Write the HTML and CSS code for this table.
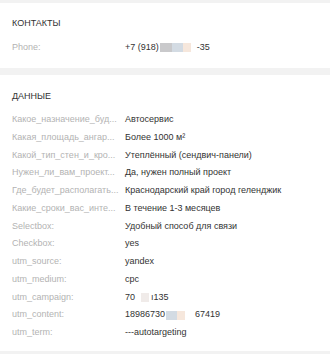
FILE: index.html
```html
<!DOCTYPE html>
<html lang="ru">
<head>
<meta charset="utf-8">
<link rel="stylesheet" href="styles.css">
</head>
<body>
<section class="card card-contacts">
  <h2 class="card-title">Контакты</h2>
  <div class="row">
    <span class="label">Phone:</span>
    <span class="value">+7 (918)<span class="mask"><i class="m-gray"></i><i class="m-blue"></i><i class="m-peach"></i></span>-35</span>
  </div>
</section>
<section class="card card-data">
  <h2 class="card-title">Данные</h2>
  <div class="row"><span class="label">Какое_назначение_буд...</span><span class="value">Автосервис</span></div>
  <div class="row"><span class="label">Какая_площадь_ангар...</span><span class="value">Более 1000 м²</span></div>
  <div class="row"><span class="label">Какой_тип_стен_и_кро...</span><span class="value">Утеплённый (сендвич-панели)</span></div>
  <div class="row"><span class="label">Нужен_ли_вам_проект...</span><span class="value">Да, нужен полный проект</span></div>
  <div class="row"><span class="label">Где_будет_располагать...</span><span class="value">Краснодарский край город геленджик</span></div>
  <div class="row"><span class="label">Какие_сроки_вас_инте...</span><span class="value">В течение 1-3 месяцев</span></div>
  <div class="row"><span class="label">Selectbox:</span><span class="value">Удобный способ для связи</span></div>
  <div class="row"><span class="label">Checkbox:</span><span class="value">yes</span></div>
  <div class="row"><span class="label">utm_source:</span><span class="value">yandex</span></div>
  <div class="row"><span class="label">utm_medium:</span><span class="value">cpc</span></div>
  <div class="row"><span class="label">utm_campaign:</span><span class="value">70<span class="mask mask-camp"><i class="m-light"></i></span>ı135</span></div>
  <div class="row"><span class="label">utm_content:</span><span class="value">18986730<span class="mask mask-content"><i class="m-blue"></i><i class="m-peach"></i></span>67419</span></div>
  <div class="row"><span class="label">utm_term:</span><span class="value">---autotargeting</span></div>
</section>
</body>
</html>
```
FILE: styles.css
```css
html, body {
  margin: 0;
  padding: 0;
}
body {
  background: #f2f2f2;
  font-family: "Liberation Sans", Arial, sans-serif;
  font-size: 9px;
  color: #333333;
  padding-top: 3px;
}
.card {
  background: #ffffff;
  padding: 14px 12px 12px;
}
.card-contacts .row {
  line-height: 18px;
  height: 18px;
}
.card-data {
  margin-top: 7px;
  padding-bottom: 9px;
}
.card-title {
  margin: 0 0 9px;
  font-size: 9px;
  font-weight: normal;
  text-transform: uppercase;
  line-height: 12px;
  color: #333333;
}
.card-data .card-title {
  margin-top: 1px;
  margin-bottom: 9px;
}
.row {
  display: grid;
  grid-template-columns: 107px 1fr;
  column-gap: 6px;
  line-height: 17.75px;
  height: 17.75px;
}
.label {
  color: #b3b3b3;
  white-space: nowrap;
  overflow: hidden;
  text-overflow: ellipsis;
}
.value {
  white-space: nowrap;
  display: flex;
  align-items: center;
}
.mask {
  display: inline-flex;
  height: 9px;
  margin: 0 6px 0 1px;
}
.mask i {
  display: block;
  height: 100%;
}
.m-gray { width: 12px; background: #c9c9cb; }
.m-blue { width: 11px; background: #d3dbe3; }
.m-peach { width: 8px; background: #f6e7dc; }
.m-light { width: 8px; background: #f0ebe9; }
.mask-camp { margin: 0 2px 0 6px; }
.mask-content { margin: 0 10px 0 1px; }
```
